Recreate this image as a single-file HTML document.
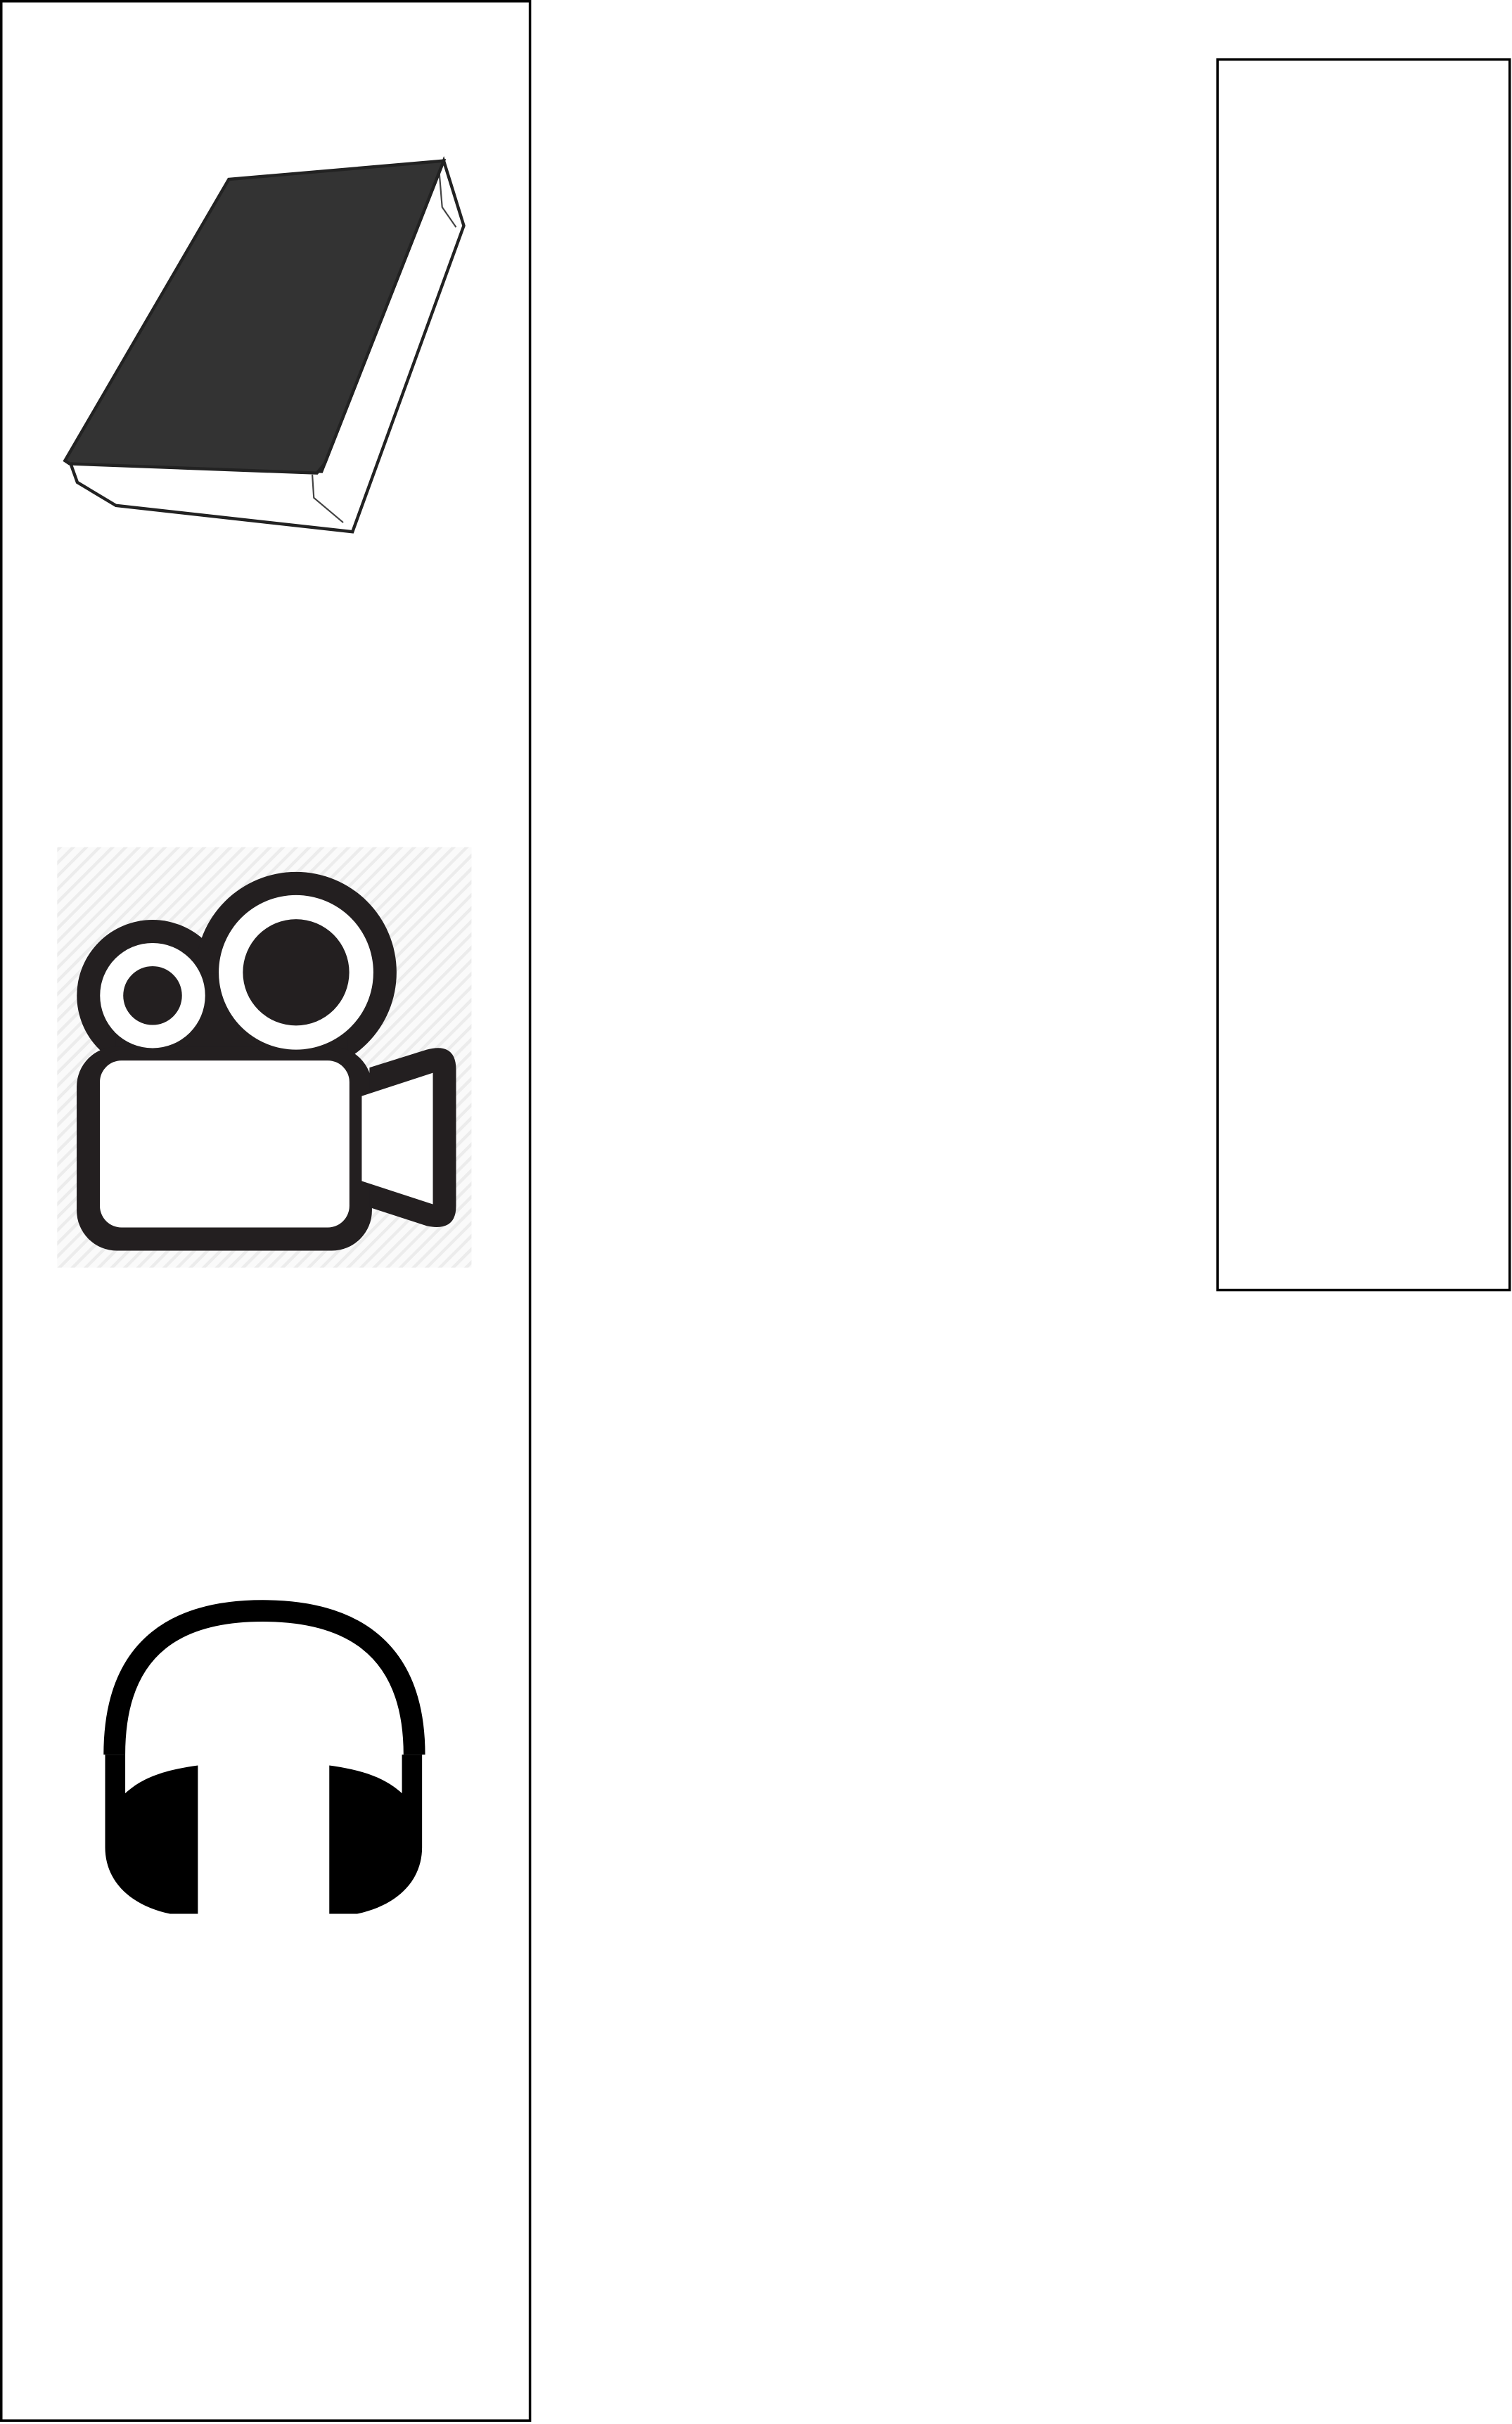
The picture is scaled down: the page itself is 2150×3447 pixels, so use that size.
<!DOCTYPE html>
<html><head><meta charset="utf-8"><style>
html,body{margin:0;padding:0;background:#fff;}
svg{display:block;}
</style></head><body>
<svg width="2150" height="3447" viewBox="0 0 978 1568" preserveAspectRatio="none" xmlns="http://www.w3.org/2000/svg">
<defs>
<pattern id="h" width="6" height="6" patternUnits="userSpaceOnUse" patternTransform="rotate(45)">
<rect width="6" height="6" fill="#fafafa"/><rect width="2" height="6" fill="#ececec"/>
</pattern>
</defs>
<rect x="0.8" y="0.8" width="342" height="1565" fill="#fff" stroke="#000" stroke-width="1.6"/>
<rect x="787.5" y="38.5" width="189" height="796" fill="#fff" stroke="#000" stroke-width="1.6"/>
<!-- book -->
<path d="M45,298 L208,305 L287,104 L300,146 L228,344 L75,327 L50,312 Z" fill="#fff" stroke="#222" stroke-width="2"/>
<path d="M202,307 L203,322 L222,338" fill="none" stroke="#444" stroke-width="1"/>
<path d="M284,110 L286,134 L295,147" fill="none" stroke="#444" stroke-width="1"/>
<path d="M42,298 L148,116 L287,104 L210,300 L205,306 L45,300 Z" fill="#333" stroke="#222" stroke-width="2"/>
<!-- camera -->
<rect x="37" y="548" width="268" height="272" fill="url(#h)"/>
<g fill="#231f20">
<circle cx="98.7" cy="644" r="49"/>
<circle cx="191.5" cy="629" r="65"/>
<rect x="75" y="630" width="150" height="60"/>
<rect x="49.6" y="677" width="191" height="132" rx="26"/>
<path d="M239,690.6 L276,679 Q295,674 295,692 L295,780 Q295,797 276,793 L239,781 Z"/>
</g>
<g fill="#fff">
<circle cx="98.7" cy="644" r="34"/>
<circle cx="191.5" cy="629" r="50"/>
<rect x="64.6" y="686" width="161.4" height="108" rx="14"/>
<path d="M234,709 L280,694 L280,779 L234,764 Z"/>
</g>
<g fill="#231f20">
<circle cx="98.7" cy="644" r="19"/>
<circle cx="191.5" cy="629" r="34.4"/>
</g>
<!-- headphones -->
<path d="M74,1135 C74,1062 118,1042 170,1042 C222,1042 268,1062 268,1135" fill="none" stroke="#000" stroke-width="14"/>
<path d="M128,1142 L128,1238 L110,1238 C82,1232 68,1215 68,1195 L68,1135 L81,1135 L81,1160 C92,1150 106,1145 128,1142 Z" fill="#000"/>
<path d="M213,1142 L213,1238 L231,1238 C259,1232 273,1215 273,1195 L273,1135 L260,1135 L260,1160 C249,1150 235,1145 213,1142 Z" fill="#000"/>
</svg>
</body></html>
